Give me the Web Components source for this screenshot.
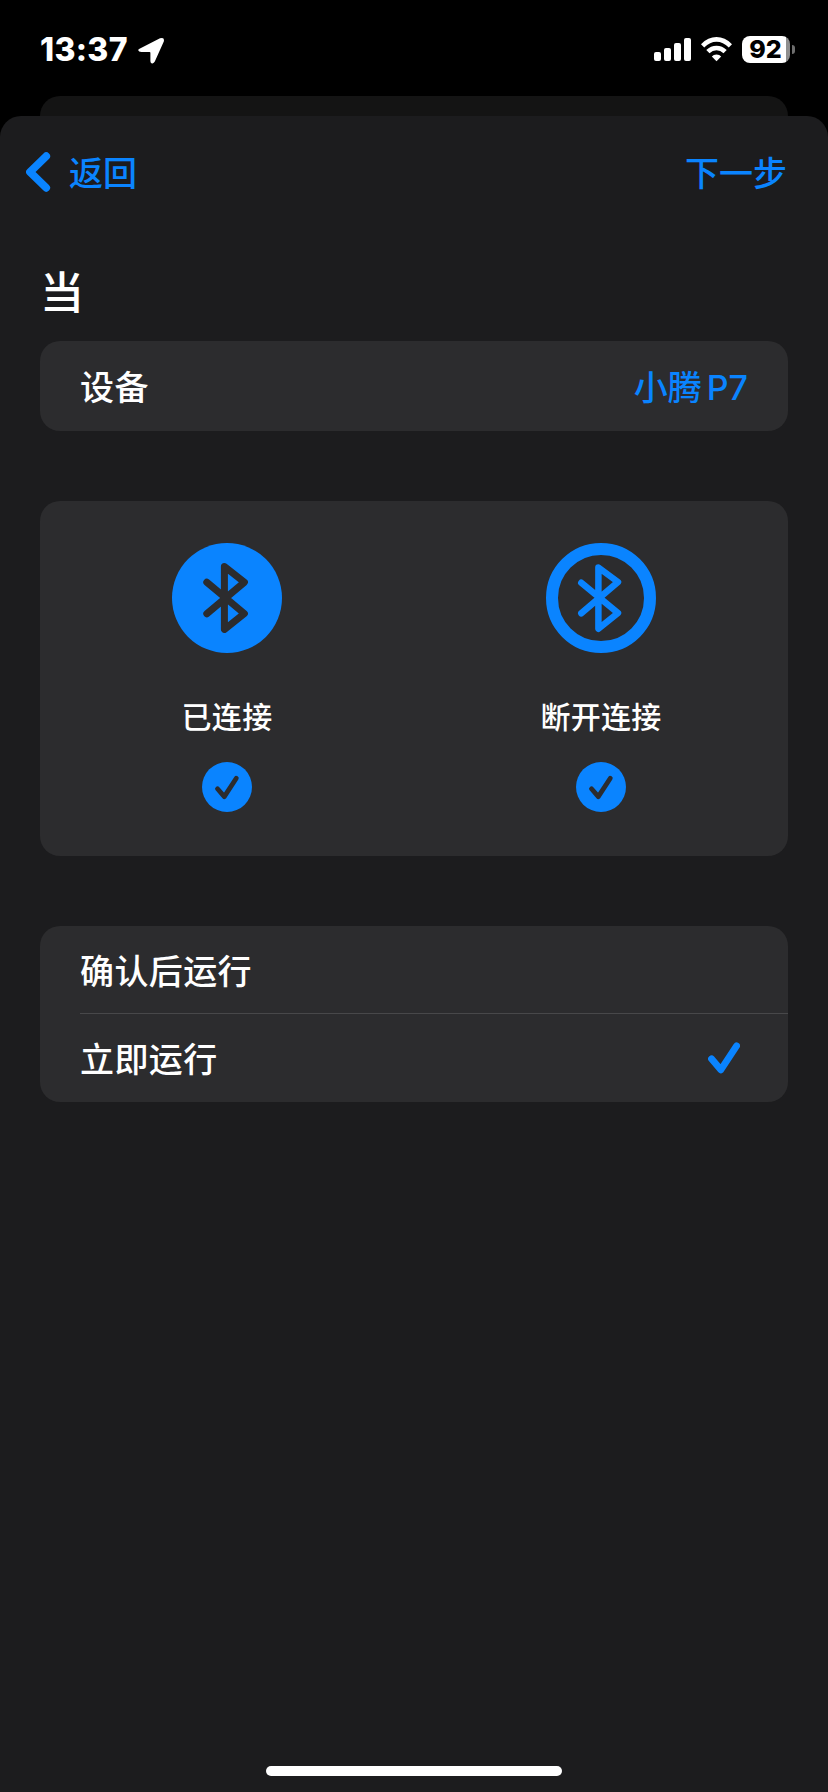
<!DOCTYPE html>
<html lang="zh-CN">
<head>
<meta charset="UTF-8">
<title>自动化</title>
<style>
    html, body {
        margin: 0;
        height: 100%;
        background: #000;
    }
    body {
        --blue: #0a84ff;
        --sheet: #1c1c1e;
        --card: #2c2c2e;
        color: #fff;
        font-family: Inter, "Noto Sans CJK SC", sans-serif;
        font-size: 34px;
        font-weight: 500;
        line-height: 40px;
    }
</style>
</head>
<body>
<app-screen>
    <status-bar slot="status" time="13:37" battery="92"></status-bar>
    <nav-bar slot="nav"><span slot="back">返回</span><span slot="next">下一步</span></nav-bar>
    <section-title>当</section-title>
    <card-group>
        <list-row tall>设备<span slot="value">小腾 P7</span></list-row>
    </card-group>
    <card-group>
        <tile-pair>
            <bt-tile filled>已连接</bt-tile>
            <bt-tile>断开连接</bt-tile>
        </tile-pair>
    </card-group>
    <card-group>
        <list-row>确认后运行</list-row>
        <list-row divider checked>立即运行</list-row>
    </card-group>
</app-screen>

<script>
class AppScreen extends HTMLElement {
    constructor() {
        super();
        this.attachShadow({ mode: "open" });
    }

    connectedCallback() {
        this.shadowRoot.innerHTML = `
            <style>
                :host {
                    display: flex;
                    flex-direction: column;
                    height: 1792px;
                    overflow: hidden;
                }
                .behind {
                    height: 20px;
                    margin: 0 40px;
                    border-radius: 20px 20px 0 0;
                    background: #141414;
                }
                .sheet {
                    flex: 1;
                    display: flex;
                    flex-direction: column;
                    border-radius: 21px 21px 0 0;
                    background: var(--sheet);
                }
                .content {
                    flex: 1;
                    display: flex;
                    flex-direction: column;
                    gap: 70px;
                    padding: 0 40px;
                }
                .home {
                    align-self: center;
                    width: 296px;
                    height: 10px;
                    margin-bottom: 16px;
                    border-radius: 5px;
                    background: #fff;
                }
            </style>
            <slot name="status"></slot>
            <div class="behind"></div>
            <div class="sheet">
                <slot name="nav"></slot>
                <div class="content"><slot></slot></div>
                <div class="home"></div>
            </div>
        `;
    }
}

class StatusBar extends HTMLElement {
    constructor() {
        super();
        this.attachShadow({ mode: "open" });
    }

    connectedCallback() {
        const time = this.getAttribute("time") || "";
        const battery = this.getAttribute("battery") || "100";

        this.shadowRoot.innerHTML = `
            <style>
                :host {
                    display: flex;
                    align-items: center;
                    box-sizing: border-box;
                    height: 96px;
                    padding: 3px 33px 0 40px;
                }
                svg {
                    display: block;
                    fill: #fff;
                }
                .time {
                    width: 98px;
                    margin-top: 1px;
                    font-size: 32px;
                    font-weight: 800;
                    letter-spacing: 0.3px;
                }
                .arrow { margin-top: 2px; }
                .signal {
                    margin-top: 1px;
                    margin-left: auto;
                }
                .wifi { margin: 0 10px 0 9px; }
                .battery {
                    box-sizing: border-box;
                    width: 48px;
                    height: 27px;
                    padding-right: 1px;
                    border-radius: 8px;
                    background: linear-gradient(to right, #fff 44px, #8e8e8e 44px);
                    color: #000;
                    font-size: 25px;
                    font-weight: 800;
                    line-height: 27px;
                    text-align: center;
                }
                .cap {
                    width: 3px;
                    height: 9px;
                    margin-left: 2px;
                    border-radius: 0 4px 4px 0;
                    background: #6e6e6e;
                }
            </style>
            <span class="time">${time}</span>
            <svg class="arrow" width="27" height="27" viewBox="0 0 27 27">
                <path d="M2 11.5L22 1.3Q26.8-.3 25.8 4.6L16.8 24.6Q15.6 27 13.5 26.2Q12.4 25.8 12.4 24V15.8Q12.4 15 11.6 15H3.4Q.6 14.8.2 13.2Q.2 12.3 2 11.5Z"/>
            </svg>
            <svg class="signal" width="38" height="24" viewBox="0 0 38 24">
                <rect x="0" y="14" width="7" height="9" rx="2"/>
                <rect x="10" y="10" width="7" height="13" rx="2"/>
                <rect x="20" y="5" width="7" height="18" rx="2"/>
                <rect x="30" y="0" width="7" height="23" rx="2"/>
            </svg>
            <svg class="wifi" width="31" height="25" viewBox="0 0 31 25">
                <g style="fill:none;stroke:#fff;stroke-width:4.6">
                    <path d="M1.6 8.8Q8 2.4 15.5 2.4T29.4 8.8"/>
                    <path d="M6.9 14.6Q10.6 11 15.5 11T24.1 14.6"/>
                </g>
                <path d="M15.5 24.2L10.8 19.4Q12.5 17.4 15.5 17.4T20.2 19.4Z"/>
            </svg>
            <div class="battery">${battery}</div>
            <div class="cap"></div>
        `;
    }
}

class NavBar extends HTMLElement {
    constructor() {
        super();
        this.attachShadow({ mode: "open" });
    }

    connectedCallback() {
        this.shadowRoot.innerHTML = `
            <style>
                :host {
                    display: flex;
                    align-items: center;
                    justify-content: space-between;
                    height: 112px;
                    padding: 0 41px 0 26px;
                    color: var(--blue);
                }
                .back {
                    display: flex;
                    align-items: center;
                    gap: 18px;
                }
                .text { margin-top: 3px; }
            </style>
            <div class="back">
                <svg width="25" height="40" viewBox="0 0 25 40" fill="none" stroke="#0a84ff" stroke-width="7.8" stroke-linecap="round" stroke-linejoin="round">
                    <path d="M20.2 4.2L4 20L20.2 35.8"/>
                </svg>
                <span class="text"><slot name="back"></slot></span>
            </div>
            <span class="text"><slot name="next"></slot></span>
        `;
    }
}

class SectionTitle extends HTMLElement {
    constructor() {
        super();
        this.attachShadow({ mode: "open" });
    }

    connectedCallback() {
        this.shadowRoot.innerHTML = `
            <style>
                :host {
                    display: block;
                    height: 60px;
                    margin: 35px 0 -52px;
                    font-size: 44px;
                    font-weight: 500;
                    line-height: 60px;
                }
            </style>
            <slot></slot>
        `;
    }
}

class CardGroup extends HTMLElement {
    constructor() {
        super();
        this.attachShadow({ mode: "open" });
    }

    connectedCallback() {
        this.shadowRoot.innerHTML = `
            <style>
                :host {
                    display: block;
                    border-radius: 20px;
                    background: var(--card);
                }
            </style>
            <slot></slot>
        `;
    }
}

class ListRow extends HTMLElement {
    constructor() {
        super();
        this.attachShadow({ mode: "open" });
    }

    connectedCallback() {
        const check = this.hasAttribute("checked")
            ? `<svg width="32" height="32" viewBox="0 0 32 32" fill="none" stroke="#0a84ff" stroke-width="6.8" stroke-linecap="round" stroke-linejoin="round">
                    <path d="M3.5 16.8L12.8 27.8L28.6 3.9"/>
               </svg>`
            : "";

        this.shadowRoot.innerHTML = `
            <style>
                :host {
                    display: block;
                    padding-left: 40px;
                }
                .row {
                    display: flex;
                    align-items: center;
                    justify-content: space-between;
                    box-sizing: border-box;
                    height: 88px;
                    padding-right: 40px;
                }
                :host([tall]) .row { height: 90px; }
                :host([divider]) .row { box-shadow: 0 -1px #48484a; }
                .text {
                    margin-top: 3px;
                    letter-spacing: 0.4px;
                }
                .value {
                    color: var(--blue);
                    letter-spacing: 0;
                    word-spacing: -4px;
                }
                :host([tall]) .text { margin-top: 4px; }
                svg { margin-right: 8px; }
            </style>
            <div class="row">
                <span class="text"><slot></slot></span>
                ${check || '<span class="text value"><slot name="value"></slot></span>'}
            </div>
        `;
    }
}

class TilePair extends HTMLElement {
    constructor() {
        super();
        this.attachShadow({ mode: "open" });
    }

    connectedCallback() {
        this.shadowRoot.innerHTML = `
            <style>
                :host {
                    display: grid;
                    grid-template-columns: 1fr 1fr;
                    height: 355px;
                }
            </style>
            <slot></slot>
        `;
    }
}

class BtTile extends HTMLElement {
    constructor() {
        super();
        this.attachShadow({ mode: "open" });
    }

    connectedCallback() {
        // Filled: dark rune on a disc. Otherwise: blue rune in a ring.
        const icon = this.hasAttribute("filled")
            ? `<circle cx="55" cy="55" r="55" fill="#0a84ff"/>
               <path stroke="#2c2c2e" stroke-width="7" d="M34.8 39.2L72.4 70.6L52.4 86.4V23.6L72.4 39.2L34.8 70.7"/>`
            : `<circle cx="55" cy="55" r="49" stroke="#0a84ff" stroke-width="12"/>
               <path stroke="#0a84ff" stroke-width="6.5" d="M35.3 39.7L72 70L52.4 85.7V24.5L72 39L35.3 70.3"/>`;

        this.shadowRoot.innerHTML = `
            <style>
                :host {
                    display: flex;
                    flex-direction: column;
                    align-items: center;
                    padding-top: 42px;
                    font-size: 30px;
                }
                svg {
                    display: block;
                    fill: none;
                    stroke-linecap: round;
                    stroke-linejoin: round;
                }
                .label {
                    margin: 44px 0 25px;
                    letter-spacing: 0.3px;
                }
            </style>
            <svg width="110" height="110" viewBox="0 0 110 110">${icon}</svg>
            <div class="label"><slot></slot></div>
            <svg width="50" height="50" viewBox="0 0 50 50">
                <circle cx="25" cy="25" r="25" fill="#0a84ff"/>
                <path stroke="#2c2c2e" stroke-width="4.8" d="M15.5 26.7L22.3 34.6L34.3 16.3"/>
            </svg>
        `;
    }
}

customElements.define("app-screen", AppScreen);
customElements.define("status-bar", StatusBar);
customElements.define("nav-bar", NavBar);
customElements.define("section-title", SectionTitle);
customElements.define("card-group", CardGroup);
customElements.define("list-row", ListRow);
customElements.define("tile-pair", TilePair);
customElements.define("bt-tile", BtTile);
</script>
</body>
</html>
